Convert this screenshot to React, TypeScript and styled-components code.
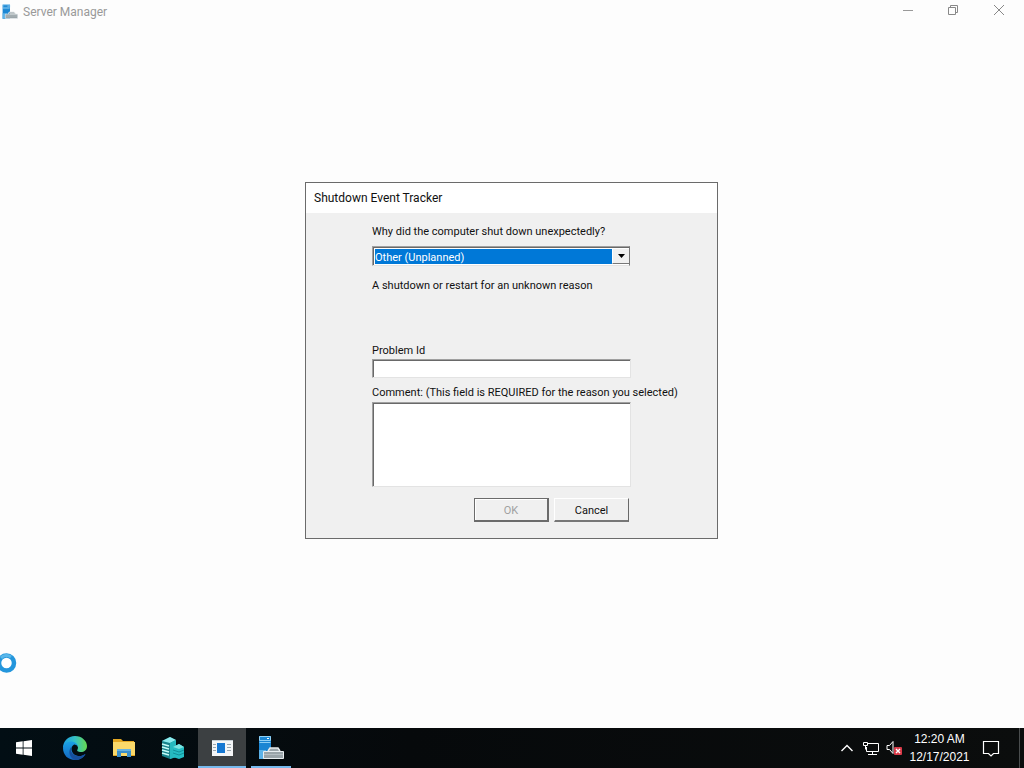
import React from "react";
import styled, { createGlobalStyle } from "styled-components";

const GlobalStyle = createGlobalStyle`
  * { box-sizing: border-box; }
  body { margin: 0; background: #fdfdfd; font-family: Roboto, "Noto Sans", sans-serif; }
  button, input, select, textarea { font: inherit; border-radius: 0; }
`;

const Desktop = styled.div`
  position: relative;
  display: flex;
  flex-direction: column;
  min-height: 100vh;
  overflow: hidden;
`;

const WindowBar = styled.header`
  display: flex;
  align-items: center;
  gap: 5px;
  height: 24px;
  padding-left: 2px;
`;

const WindowTitle = styled.h1`
  flex: 1;
  margin: 0;
  color: #999;
  font-size: 12px;
  font-weight: 400;
  line-height: 16px;
`;

const WindowControls = styled.div`
  display: flex;
  padding-right: 2px;
  height: 100%;
`;

const PlainButton = styled.button`
  display: flex;
  align-items: center;
  justify-content: center;
  padding: 0;
  border: 0;
  background: transparent;
`;

const WindowButton = styled(PlainButton)`
  width: 46px;
  height: 20px;
`;

const Workspace = styled.main`
  flex: 1;
  display: flex;
  align-items: center;
  justify-content: center;
  padding: 0 1px 31px 0;
`;

const Dialog = styled.section`
  width: 413px;
  border: 1px solid #6b6b6b;
  background: #f0f0f0;
  color: #111;
  font-size: 11px;
  line-height: 16px;
`;

const DialogTitle = styled.h2`
  margin: 0;
  padding: 0 8px;
  background: #fff;
  font-size: 12px;
  font-weight: 400;
  line-height: 30px;
`;

const Form = styled.form`
  display: flex;
  flex-direction: column;
  padding: 11px 34px 16px 66px;
`;

const Label = styled.label`
  white-space: nowrap;
`;

const Combo = styled.div`
  display: flex;
  width: 258px;
  height: 20px;
  margin: 6px 0 12px;
  padding: 2px 0 1px 2px;
  border: 1px solid #a0a0a0;
  border-right-color: #777;
  border-bottom-color: #e3e3e3;
  box-shadow: inset 1px 1px 0 #696969;
  background: #fff;
`;

const Select = styled.select`
  appearance: none;
  flex: 1;
  min-width: 0;
  padding: 2px 0 0;
  border: 0;
  outline: 0;
  background: #0078d7;
  color: #fff;
  line-height: 13px;
`;

const ComboArrow = styled.span`
  display: flex;
  align-items: center;
  justify-content: center;
  width: 17px;
  border-bottom: 1px solid #777;
  border-left: 1px solid #fff;
  background: #f0f0f0;
  pointer-events: none;
`;

const Description = styled.p`
  min-height: 65px;
  margin: 0;
`;

const fieldLook = `
  display: block;
  width: 259px;
  padding: 2px 3px;
  border: 1px solid #a0a0a0;
  border-right-color: #e3e3e3;
  border-bottom-color: #e3e3e3;
  box-shadow: inset 1px 1px 0 #696969;
  outline: 0;
  background: #fff;
  resize: none;
`;

const Field = styled.input`
  ${fieldLook}
  height: 19px;
  margin: 0 0 7px;
`;

const CommentBox = styled.textarea`
  ${fieldLook}
  height: 85px;
  margin: 1px 0 11px;
`;

const Actions = styled.div`
  display: flex;
  justify-content: flex-end;
  gap: 5px;
  width: 257px;
`;

const DialogButton = styled.button<{ $default?: boolean }>`
  width: 75px;
  height: 24px;
  padding: 2px 0 0;
  border-style: solid;
  border-width: ${(p) => (p.$default ? "1px 2px 2px 1px" : "1px 1px 2px 1px")};
  border-color: ${(p) => (p.$default ? "#6b6b6b" : "#fff #696969 #777 #fff")};
  box-shadow: inset 1px 1px 0 ${(p) => (p.$default ? "#fff" : "#f0f0f0")};
  background: #f0f0f0;
  color: #111;
  &:disabled { color: #a0a0a0; }
`;

const BusyCursor = styled.svg`
  position: absolute;
  left: -4px;
  bottom: 95px;
`;

const Taskbar = styled.footer`
  display: flex;
  height: 40px;
  background: linear-gradient(90deg, #020e14, #06090b 40%, #0b0d0d);
  color: #fff;
`;

const TaskList = styled.nav`
  display: flex;
  flex: 1;
  gap: 1px;
`;

const TaskButton = styled(PlainButton)<{ $active?: boolean }>`
  width: 48px;
  background: ${(p) => (p.$active ? "#3c4042" : "transparent")};
  border-bottom: ${(p) => (p.$active ? "2px solid #76b9ed" : "0")};
  padding-top: ${(p) => (p.$active ? "2px" : "0")};
`;

const StartButton = styled(TaskButton)`
  margin-right: 2px;
`;

const RunningButton = styled(TaskButton)`
  width: 40px;
  margin-left: 4px;
  padding-top: 2px;
  border-bottom: 2px solid #76b9ed;
`;

const Tray = styled.div`
  display: flex;
  align-items: stretch;
`;

const TrayButton = styled(PlainButton)`
  width: 24px;
`;

const Clock = styled(PlainButton)`
  flex-direction: column;
  width: 65px;
  color: #fff;
  font-family: "Liberation Sans", sans-serif;
  font-size: 12px;
  line-height: 18px;
`;

const NotificationButton = styled(PlainButton)`
  width: 38px;
`;

const ShowDesktop = styled(PlainButton)`
  width: 5px;
  margin-left: 9px;
  border-left: 1px solid #4a4d4e;
`;

const ServerIcon = ({ size }: { size: number }) => (
  <svg width={size} height={size} viewBox="0 0 26 26" aria-hidden="true">
    <path d="M1 1h12v23H1z" fill="#1b86d3" />
    <path d="M1.500 1.500h11v4h-11zM1.500 7.500h11" fill="none" stroke="#8fd0f5" />
    <path d="M9 3.500h2" stroke="#fff" />
    <path d="M1 24v-9h7v9z" fill="#5cb2e8" />
    <path d="M10 16l2-3h8l2 3" fill="#9aa4a9" stroke="#e6eaec" strokeWidth="1.500" />
    <path d="M5.500 16.500h20v7h-20z" fill="#9aa4a9" stroke="#e8edf0" />
    <path d="M6 19.500h19" stroke="#b4bdc2" />
  </svg>
);

export default function App() {
  return (
    <Desktop>
      <GlobalStyle />
      <WindowBar>
        <ServerIcon size={16} />
        <WindowTitle>Server Manager</WindowTitle>
        <WindowControls>
          <WindowButton aria-label="Minimize">
            <svg width="12" height="12" fill="none" stroke="#999"><path d="M2 6.500h10" /></svg>
          </WindowButton>
          <WindowButton aria-label="Restore">
            <svg width="12" height="12" fill="none" stroke="#888"><path d="M1.500 3.500h7v7h-7zM3.500 3.500v-2h7v7h-2" /></svg>
          </WindowButton>
          <WindowButton aria-label="Close">
            <svg width="12" height="12" fill="none" stroke="#888"><path d="M1 1l10 10M11 1L1 11" /></svg>
          </WindowButton>
        </WindowControls>
      </WindowBar>

      <Workspace>
        <Dialog role="dialog" aria-labelledby="dialog-title">
          <DialogTitle id="dialog-title">Shutdown Event Tracker</DialogTitle>
          <Form onSubmit={(e) => e.preventDefault()}>
            <Label htmlFor="reason">Why did the computer shut down unexpectedly?</Label>
            <Combo>
              <Select id="reason">
                <option>Other (Unplanned)</option>
              </Select>
              <ComboArrow>
                <svg width="7" height="4" aria-hidden="true"><path d="M0 0h7L3.500 4z" fill="#000" /></svg>
              </ComboArrow>
            </Combo>
            <Description>A shutdown or restart for an unknown reason</Description>
            <Label htmlFor="problem">Problem Id</Label>
            <Field id="problem" type="text" />
            <Label htmlFor="comment">Comment: (This field is REQUIRED for the reason you selected)</Label>
            <CommentBox id="comment" />
            <Actions>
              <DialogButton type="submit" $default disabled>OK</DialogButton>
              <DialogButton type="button">Cancel</DialogButton>
            </Actions>
          </Form>
        </Dialog>
      </Workspace>

      <BusyCursor width="22" height="20" viewBox="0 0 22 20" aria-hidden="true">
        <circle cx="10.500" cy="10" r="7.500" fill="#fff" stroke="#2496dc" strokeWidth="4.500" />
        <path d="M5 5a7.500 7.500 0 0 1 10-1" fill="none" stroke="#59b7ea" strokeWidth="3" />
      </BusyCursor>

      <Taskbar>
        <TaskList aria-label="Taskbar">
          <StartButton aria-label="Start">
            <svg width="16" height="16" fill="#fff"><path d="M0 2.300L6.700 1.300v6.300H0zM7.500 1.200L16 0v7.600H7.500zM0 8.400h6.700v6.300L0 13.700zM7.500 8.400H16V16l-8.500-1.200z" /></svg>
          </StartButton>
          <TaskButton aria-label="Microsoft Edge">
            <svg width="24" height="24" viewBox="0 0 24 24">
              <defs>
                <linearGradient id="edgeTop" x1="0" x2="1"><stop offset="0" stopColor="#1b9de2" /><stop offset=".5" stopColor="#35c1c5" /><stop offset="1" stopColor="#66d94e" /></linearGradient>
                <linearGradient id="edgeSide" x1="0" y1="0" x2="0" y2="1"><stop offset="0" stopColor="#1aa1e5" /><stop offset="1" stopColor="#1465c0" /></linearGradient>
              </defs>
              <path d="M0 12C0 5 5 0 12 0c7 0 12 5 12 10 0 4-3 6-6 6-3 0-4.500-1-3.500-2.500C16 11 14 8 11 8 6 8 2 10 0 12z" fill="url(#edgeTop)" />
              <path d="M0 12c1-4 4-6.500 8-6.500 4 0 7 2.500 7 5.500-1-2-3-3-4.500-2C7 11 8 19 15 20c3 .5 5-.5 7.500-2C20 22 16.500 24 12 24 5 24 0 19 0 12z" fill="url(#edgeSide)" />
              <path d="M9.500 10C6 13 8 19 15 20c3 .4 5-.5 7.500-2-2 4-6 6-10.500 6C5 21 5 13 9.500 10z" fill="#174f9c" />
            </svg>
          </TaskButton>
          <TaskButton aria-label="File Explorer">
            <svg width="22" height="20" viewBox="0 0 22 20">
              <path d="M0 1h8l2 2h11v4H0z" fill="#e5a823" />
              <path d="M0 4h22v14H0z" fill="#fbd96a" />
              <path d="M4 19v-8h14v8h-4v-4H8v4z" fill="#3b8fca" />
              <path d="M4 11h14v2H4z" fill="#68b3df" />
              <path d="M0 17h4v1H0zM18 17h4v1h-4z" fill="#e5a823" />
            </svg>
          </TaskButton>
          <TaskButton aria-label="Servers">
            <svg width="24" height="24" viewBox="0 0 24 24">
              <path d="M1 5l8-4 6 3v17l-6 2-8-3z" fill="#17838c" />
              <path d="M1 5l8-4 6 3-6 3z" fill="#8cecef" />
              <path d="M9 7l6-3v17l-6 2z" fill="#26b9bf" />
              <path d="M1 8l7 2M1 11l7 2M1 14l7 2M1 17l7 2" stroke="#c4fbf8" strokeWidth="1.500" />
              <path d="M12 11l6-3 5 3v10l-5 2-6-2z" fill="#25bdc4" />
              <path d="M12 11l6-3 5 3-5 2z" fill="#7be4e2" />
              <path d="M12 14l6 2 5-2M12 17l6 2 5-2" fill="none" stroke="#129099" />
            </svg>
          </TaskButton>
          <TaskButton $active aria-label="Shutdown Event Tracker">
            <svg width="21" height="16" viewBox="0 0 21 16">
              <path d="M0 0h21v16H0z" fill="#f4f6f7" />
              <path d="M5 3h8v10H5z" fill="#1678d2" />
              <path d="M1 4.500h3M1 7.500h3M1 10.500h3M15 4.500h4M15 7.500h4M15 10.500h4" stroke="#9aa6ae" />
              <path d="M0 .5h21" stroke="#c4cdd3" />
            </svg>
          </TaskButton>
          <RunningButton aria-label="Server Manager"><ServerIcon size={26} /></RunningButton>
        </TaskList>
        <Tray>
          <TrayButton aria-label="Show hidden icons">
            <svg width="14" height="10" fill="none" stroke="#fff" strokeWidth="1.400"><path d="M1.500 8L7 2.500 12.500 8" /></svg>
          </TrayButton>
          <TrayButton aria-label="Network">
            <svg width="18" height="15" fill="none" stroke="#fff"><path d="M5.500 2.500h11v8h-12V6M10.500 10.500v3M6 13.500h9M1.500 1.500h4v3h-4zM3.500 4.500v4" /></svg>
          </TrayButton>
          <TrayButton aria-label="Volume muted">
            <svg width="18" height="16" viewBox="0 0 18 16" fill="none">
              <path d="M1 5.500h2.500L7 1.500v12l-3.500-4H1z" stroke="#fff" />
              <rect x="8" y="7" width="8" height="8" rx="1" fill="#d93a48" />
              <path d="M10 9l4 4M14 9l-4 4" stroke="#fff" strokeWidth="1.400" />
            </svg>
          </TrayButton>
          <Clock><span>12:20 AM</span><span>12/17/2021</span></Clock>
          <NotificationButton aria-label="Notifications">
            <svg width="18" height="17" fill="none" stroke="#fff" strokeWidth="1.200"><path d="M1.500 1.500h15v12h-5L9 16l-2.500-2.500h-5z" /></svg>
          </NotificationButton>
          <ShowDesktop aria-label="Show desktop" />
        </Tray>
      </Taskbar>
    </Desktop>
  );
}
